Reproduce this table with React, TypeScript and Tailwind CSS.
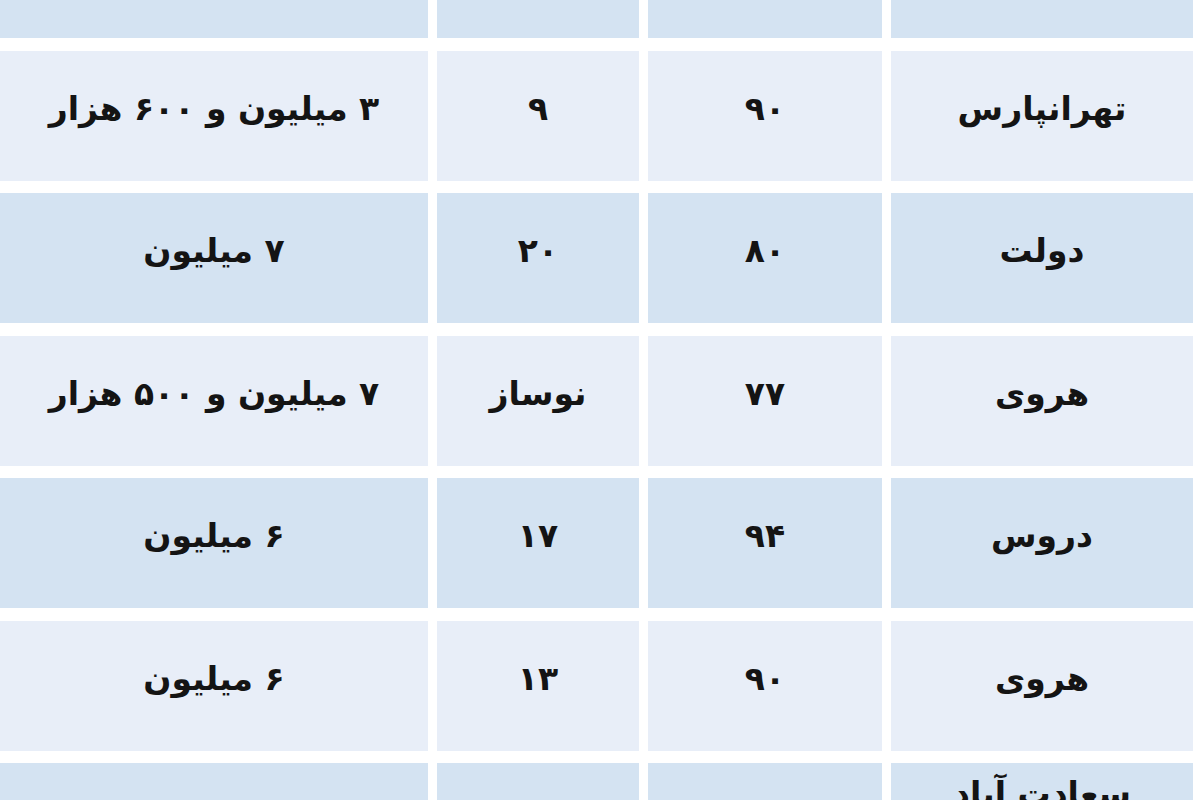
import React from 'react';

type Row = { area: string; size: string; age: string; price: string };

// listed right-to-left: area, size, age, price
const ROWS: Row[] = [
  { area: 'تهرانپارس', size: '۹۰', age: '۹', price: '۳ میلیون و ۶۰۰ هزار' },
  { area: 'دولت', size: '۸۰', age: '۲۰', price: '۷ میلیون' },
  { area: 'هروی', size: '۷۷', age: 'نوساز', price: '۷ میلیون و ۵۰۰ هزار' },
  { area: 'دروس', size: '۹۴', age: '۱۷', price: '۶ میلیون' },
  { area: 'هروی', size: '۹۰', age: '۱۳', price: '۶ میلیون' },
];

const LIGHT = 'bg-[#e8eef8]';
const DARK = 'bg-[#d4e3f2]';

const Cell: React.FC<{ shade: string; children?: React.ReactNode }> = ({ shade, children }) => (
  <div className={`${shade} flex h-[130px] items-center justify-center pb-[14px] text-[33px] font-bold text-[#141414]`}>
    {children}
  </div>
);

export default function App() {
  return (
    <div className="h-[800px] w-[1200px] overflow-hidden bg-white" style={{ fontFamily: '"DejaVu Sans", sans-serif' }}>
      <div
        dir="rtl"
        className="grid w-[1193px] grid-cols-[302px_234px_202px_428px] gap-x-[9px] gap-y-[12.5px]"
      >
        {/* header row, cut off at the top */}
        <div className={`${DARK} h-[38px]`} />
        <div className={`${DARK} h-[38px]`} />
        <div className={`${DARK} h-[38px]`} />
        <div className={`${DARK} h-[38px]`} />

        {ROWS.map((r, i) => {
          const shade = i % 2 === 0 ? LIGHT : DARK;
          return (
            <React.Fragment key={i}>
              <Cell shade={shade}>{r.area}</Cell>
              <Cell shade={shade}>{r.size}</Cell>
              <Cell shade={shade}>{r.age}</Cell>
              <Cell shade={shade}>{r.price}</Cell>
            </React.Fragment>
          );
        })}

        {/* last row, cut off at the bottom */}
        <div className={`${DARK} flex h-[130px] justify-center pt-[10px] text-[33px] font-bold leading-[1.3] text-[#141414]`}>
          سعادت آباد
        </div>
        <div className={`${DARK} h-[130px]`} />
        <div className={`${DARK} h-[130px]`} />
        <div className={`${DARK} h-[130px]`} />
      </div>
    </div>
  );
}
